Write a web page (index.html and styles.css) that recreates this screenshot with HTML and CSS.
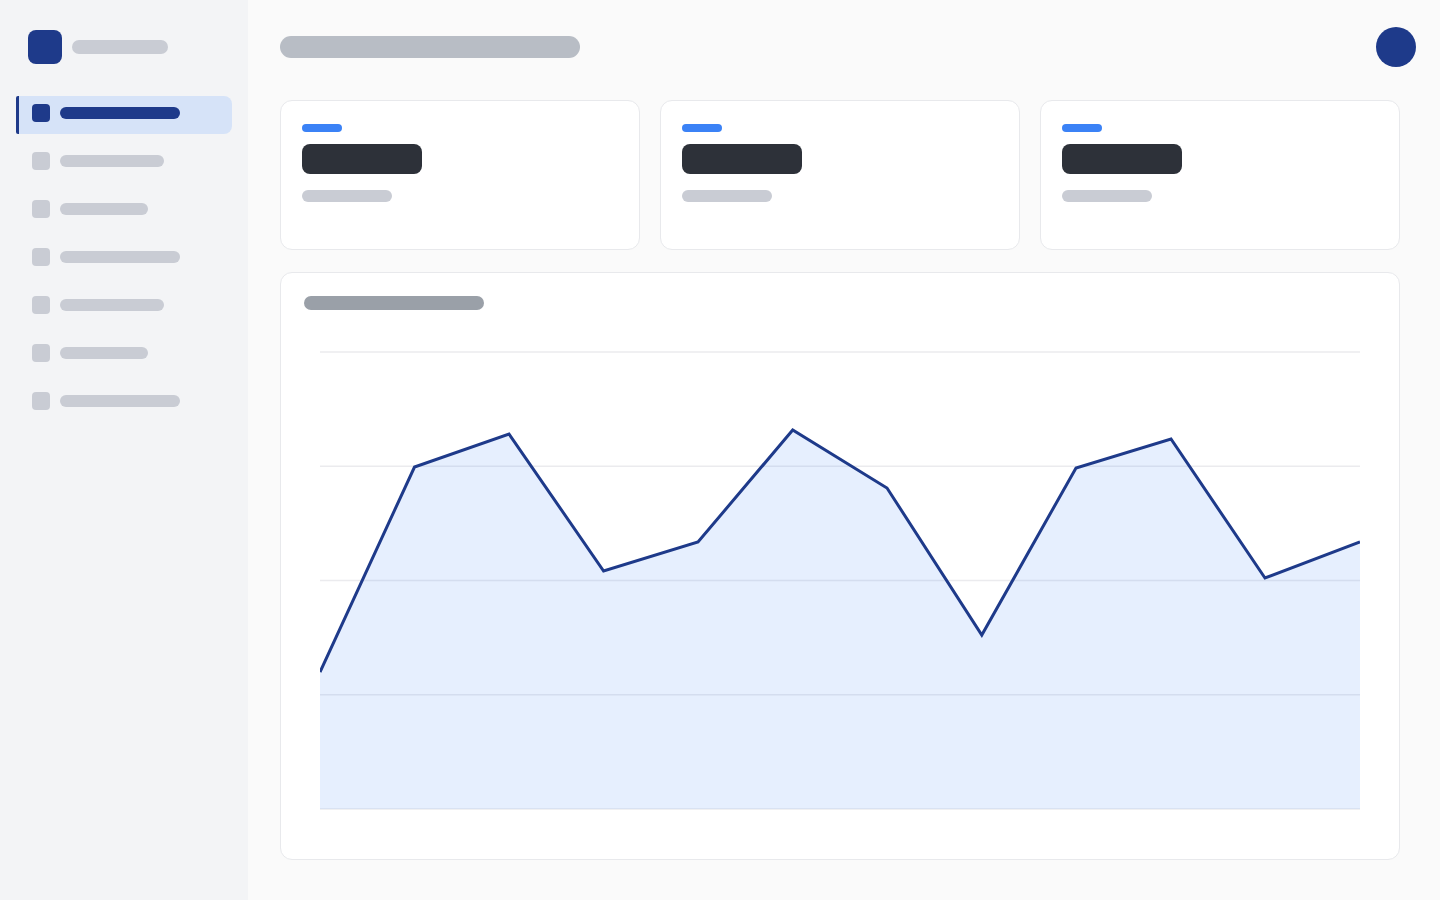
FILE: index.html
```html
<!DOCTYPE html>
<html lang="en">
<head>
  <meta charset="UTF-8">
  <meta name="viewport" content="width=device-width, initial-scale=1.0">
  <title>Dashboard</title>

  <link rel="stylesheet" href="styles.css">
</head>
<body>
  <!-- Sidebar -->
  <aside class="sidenav">
    <div class="brand">
      <div class="brand-logo"></div>
      <div class="bar brand-name"></div>
    </div>

    <nav class="nav">
      <a href="#" class="nav-item active"><span class="nav-icon"></span><span class="bar nav-label w120"></span></a>
      <a href="#" class="nav-item"><span class="nav-icon"></span><span class="bar nav-label w104"></span></a>
      <a href="#" class="nav-item"><span class="nav-icon"></span><span class="bar nav-label w88"></span></a>
      <a href="#" class="nav-item"><span class="nav-icon"></span><span class="bar nav-label w120"></span></a>
      <a href="#" class="nav-item"><span class="nav-icon"></span><span class="bar nav-label w104"></span></a>
      <a href="#" class="nav-item"><span class="nav-icon"></span><span class="bar nav-label w88"></span></a>
      <a href="#" class="nav-item"><span class="nav-icon"></span><span class="bar nav-label w120"></span></a>
    </nav>
  </aside>

  <!-- Main Content -->
  <main class="main">
    <header class="topbar">
      <div class="bar page-title"></div>
      <div class="avatar"></div>
    </header>

    <section class="stats">
      <div class="card stat">
        <div class="bar stat-tag"></div>
        <div class="bar stat-value"></div>
        <div class="bar stat-label"></div>
      </div>
      <div class="card stat">
        <div class="bar stat-tag"></div>
        <div class="bar stat-value"></div>
        <div class="bar stat-label"></div>
      </div>
      <div class="card stat">
        <div class="bar stat-tag"></div>
        <div class="bar stat-value"></div>
        <div class="bar stat-label"></div>
      </div>
    </section>

    <section class="card chart-card">
      <div class="bar chart-title"></div>
      <svg class="chart" width="1040" height="460" viewBox="0 0 1040 460">
        <!-- grid -->
        <g stroke="#ebebee" stroke-width="1.5">
          <line x1="0" y1="1" x2="1040" y2="1" />
          <line x1="0" y1="115.25" x2="1040" y2="115.25" />
          <line x1="0" y1="229.5" x2="1040" y2="229.5" />
          <line x1="0" y1="343.75" x2="1040" y2="343.75" />
          <line x1="0" y1="458" x2="1040" y2="458" />
        </g>
        <!-- area -->
        <path fill="#3b82f6" fill-opacity="0.13"
          d="M0 321 L94.5 116 L189 83 L283.6 220 L378 191 L472.7 79 L567 137 L661.8 284 L756 117 L851 88 L945 227 L1040 191 L1040 458 L0 458 Z" />
        <!-- line -->
        <path fill="none" stroke="#1e3a8a" stroke-width="3" stroke-linejoin="miter"
          d="M0 321 L94.5 116 L189 83 L283.6 220 L378 191 L472.7 79 L567 137 L661.8 284 L756 117 L851 88 L945 227 L1040 191" />
      </svg>
    </section>
  </main>
</body>
</html>
```

FILE: styles.css
```css
/* Global Styles */
* {
  box-sizing: border-box;
}

body {
  font-family: 'Inter', 'Liberation Sans', sans-serif;
  margin: 0;
  padding: 0;
  height: 100vh;
  display: flex;
  background-color: #fafafa;
  overflow: hidden;
}

/* Placeholder bars */
.bar {
  display: block;
  border-radius: 999px;
  background-color: #c9ccd4;
}

/* Sidebar */
.sidenav {
  width: 248px;
  flex-shrink: 0;
  height: 100vh;
  background-color: #f3f4f6;
  padding: 30px 16px;
}

.brand {
  display: flex;
  align-items: center;
  gap: 10px;
  margin-left: 12px;
  margin-bottom: 32px;
}

.brand-logo {
  width: 34px;
  height: 34px;
  border-radius: 8px;
  background-color: #1e3a8a;
}

.brand-name {
  width: 96px;
  height: 14px;
}

.nav {
  display: flex;
  flex-direction: column;
  gap: 10px;
}

.nav-item {
  display: flex;
  align-items: flex-start;
  gap: 10px;
  height: 38px;
  padding: 8px 0 0 13px;
  border-left: 3px solid transparent;
  border-radius: 2px 8px 8px 2px;
  text-decoration: none;
}

.nav-icon {
  width: 18px;
  height: 18px;
  border-radius: 4px;
  background-color: #c9ccd4;
}

.nav-label {
  height: 12px;
  margin-top: 3px;
}

.w120 { width: 120px; }
.w104 { width: 104px; }
.w88 { width: 88px; }

.nav-item.active {
  background-color: #d6e3f8;
  border-left-color: #1e3a8a;
}

.nav-item.active .nav-icon,
.nav-item.active .nav-label {
  background-color: #1e3a8a;
}

/* Main Content */
.main {
  flex: 1;
  display: flex;
  flex-direction: column;
  height: 100vh;
  padding: 27px 40px 40px 32px;
}

.topbar {
  display: flex;
  align-items: center;
  justify-content: space-between;
  height: 40px;
  margin-right: -16px;
  margin-bottom: 33px;
}

.page-title {
  width: 300px;
  height: 22px;
  background-color: #b8bdc5;
}

.avatar {
  width: 40px;
  height: 40px;
  border-radius: 50%;
  background-color: #1e3a8a;
}

/* Cards */
.card {
  background-color: #ffffff;
  border: 1px solid #e8e9ec;
  border-radius: 12px;
}

.stats {
  display: grid;
  grid-template-columns: repeat(3, 1fr);
  gap: 20.5px;
  margin-bottom: 22px;
}

.stat {
  height: 150px;
  padding: 23px 21px;
}

.stat-tag {
  width: 40px;
  height: 8px;
  background-color: #3b82f6;
}

.stat-value {
  width: 120px;
  height: 30px;
  margin-top: 12px;
  border-radius: 8px;
  background-color: #2d3139;
}

.stat-label {
  width: 90px;
  height: 12px;
  margin-top: 16px;
}

/* Chart */
.chart-card {
  flex: 1;
  padding: 23px;
}

.chart-title {
  width: 180px;
  height: 14px;
  background-color: #9aa0a8;
}

.chart {
  display: block;
  margin: 41px 16px 0;
}
```
